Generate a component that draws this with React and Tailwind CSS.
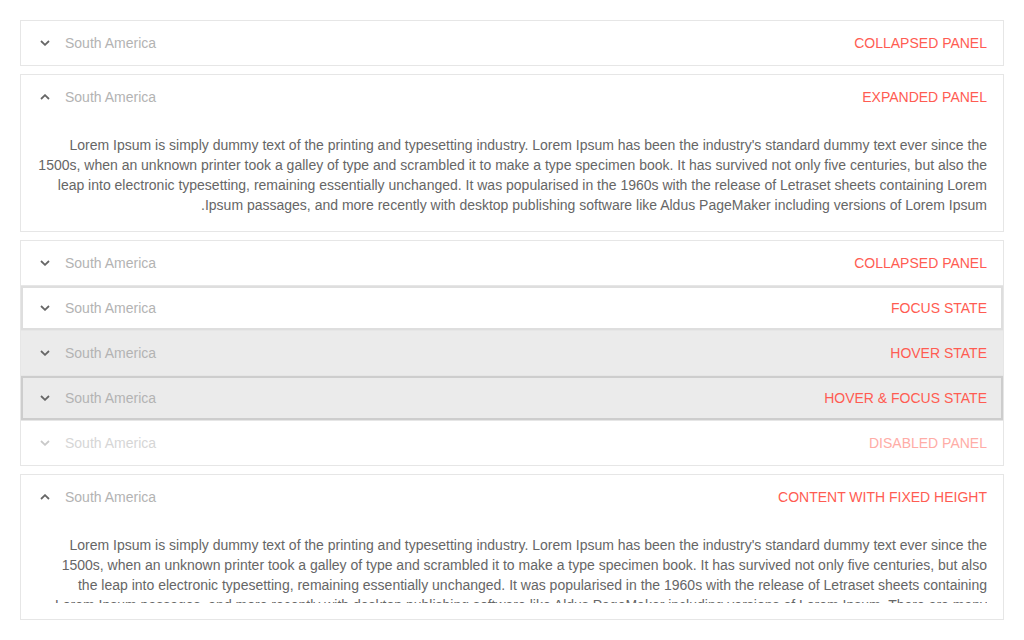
const LOREM =
  "Lorem Ipsum is simply dummy text of the printing and typesetting industry. Lorem Ipsum has been the industry's standard dummy text ever since the 1500s, when an unknown printer took a galley of type and scrambled it to make a type specimen book. It has survived not only five centuries, but also the leap into electronic typesetting, remaining essentially unchanged. It was popularised in the 1960s with the release of Letraset sheets containing Lorem Ipsum passages, and more recently with desktop publishing software like Aldus PageMaker including versions of Lorem Ipsum.";

const LOREM_LONG =
  LOREM +
  " There are many variations of passages of Lorem Ipsum available, but the majority have suffered alteration in some form, by injected humour, or randomised words which don't look even slightly believable.";

const Chevron = ({ up = false, color = '#666666' }) => (
  <svg width="10" height="6" viewBox="0 0 10 6" className="shrink-0">
    <path
      d={up ? 'M1 5 L5 1.2 L9 5' : 'M1 1 L5 4.8 L9 1'}
      fill="none"
      stroke={color}
      strokeWidth="1.8"
    />
  </svg>
);

const Header = ({ title, up, disabled, className = '' }) => (
  <div className={`flex items-center h-[44px] pl-[19px] pr-4 text-[14px] ${className}`}>
    <Chevron up={up} color={disabled ? '#c9c9c9' : '#666666'} />
    <span className={`ml-[15px] ${disabled ? 'text-[#d6d6d6]' : 'text-[#b3b3b3]'}`}>South America</span>
    <span className={`ml-auto ${disabled ? 'text-[#ffaca6]' : 'text-[#ff5c52]'}`}>{title}</span>
  </div>
);

export default function App() {
  return (
    <div
      className="p-5 bg-white min-h-screen flex flex-col gap-2"
      style={{ fontFamily: '"Liberation Sans", Arial, sans-serif' }}
    >
      <div className="border border-[#e6e6e6]">
        <Header title="COLLAPSED PANEL" />
      </div>

      <div className="border border-[#e6e6e6]">
        <Header title="EXPANDED PANEL" up />
        <div className="px-4 py-4">
          <p dir="rtl" className="text-[14px] leading-[20px] text-[#666666]">{LOREM}</p>
        </div>
      </div>

      <div className="border border-[#e6e6e6]">
        <Header title="COLLAPSED PANEL" className="h-[45px] border-b border-[#e6e6e6]" />
        <Header title="FOCUS STATE" className="h-[45px] shadow-[inset_0_0_0_2px_#dedede] border-b border-[#e6e6e6]" />
        <Header title="HOVER STATE" className="h-[45px] bg-[#ebebeb] border-b border-[#e6e6e6]" />
        <Header title="HOVER & FOCUS STATE" className="h-[45px] bg-[#ebebeb] shadow-[inset_0_0_0_2px_#cdcdcd] border-b border-[#e6e6e6]" />
        <Header title="DISABLED PANEL" disabled />
      </div>

      <div className="border border-[#e6e6e6]">
        <Header title="CONTENT WITH FIXED HEIGHT" up />
        <div className="pt-4 pb-4 pl-[31px] pr-4">
          <div className="h-[68px] overflow-hidden">
            <p dir="rtl" className="text-[14px] leading-[20px] text-[#666666]">{LOREM_LONG}</p>
          </div>
        </div>
      </div>
    </div>
  );
}
